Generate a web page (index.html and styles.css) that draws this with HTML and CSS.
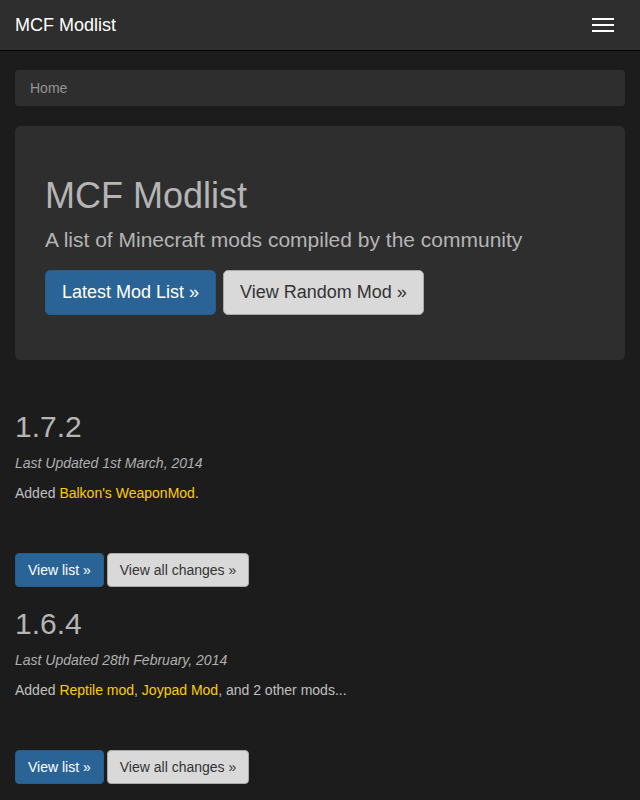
FILE: index.html
```html
<!DOCTYPE html>
<html lang="en">
<head>
<meta charset="utf-8">
<title>MCF Modlist</title>
<link rel="stylesheet" href="styles.css">
</head>
<body>
<nav class="navbar">
  <a class="brand" href="#">MCF Modlist</a>
  <button class="toggle" aria-label="Toggle navigation">
    <span class="bar"></span><span class="bar"></span><span class="bar"></span>
  </button>
</nav>
<div class="container">
  <ol class="breadcrumb"><li>Home</li></ol>
  <div class="jumbotron">
    <h1>MCF Modlist</h1>
    <p class="lead">A list of Minecraft mods compiled by the community</p>
    <p class="actions">
      <a class="btn btn-lg btn-primary" href="#">Latest Mod List »</a>
      <a class="btn btn-lg btn-default" href="#">View Random Mod »</a>
    </p>
  </div>
  <section class="version">
    <h2>1.7.2</h2>
    <p class="updated">Last Updated 1st March, 2014</p>
    <p class="changes">Added <a href="#">Balkon's WeaponMod</a>.</p>
    <div class="actions-sm">
      <a class="btn btn-primary" href="#">View list »</a>
      <a class="btn btn-default" href="#">View all changes »</a>
    </div>
  </section>
  <section class="version">
    <h2>1.6.4</h2>
    <p class="updated">Last Updated 28th February, 2014</p>
    <p class="changes">Added <a href="#">Reptile mod</a>, <a href="#">Joypad Mod</a>, and 2 other mods...</p>
    <div class="actions-sm">
      <a class="btn btn-primary" href="#">View list »</a>
      <a class="btn btn-default" href="#">View all changes »</a>
    </div>
  </section>
</div>
</body>
</html>
```
FILE: styles.css
```css
* { box-sizing: border-box; }
html, body { margin: 0; padding: 0; }
body {
  background: #1c1c1c;
  color: #c8c8c8;
  font-family: "Liberation Sans", Arial, sans-serif;
  font-size: 14px;
  line-height: 20px;
}
a { text-decoration: none; }

.navbar {
  height: 51px;
  background: #2e2e2e;
  border-bottom: 1px solid #050505;
  display: flex;
  align-items: center;
  justify-content: space-between;
  padding: 0 15px;
}
.brand {
  color: #ffffff;
  font-size: 18px;
  line-height: 20px;
  margin-top: -1px;
}
.toggle {
  background: transparent;
  border: 0;
  padding: 0;
  margin-right: 11px;
  width: 22px;
  display: flex;
  flex-direction: column;
  gap: 4px;
  margin-top: -1px;
  cursor: pointer;
}
.bar {
  display: block;
  width: 22px;
  height: 2px;
  background: #ffffff;
}

.container { padding: 0 15px; }

.breadcrumb {
  list-style: none;
  margin: 19px 0 20px;
  padding: 8px 15px;
  background: #2e2e2e;
  border-radius: 4px;
  color: #949494;
  height: 36px;
}

.jumbotron {
  background: #2e2e2e;
  border-radius: 6px;
  padding: 30px 30px;
  margin-bottom: 50px;
}
.jumbotron h1 {
  margin: 20px 0 10px;
  font-size: 36px;
  line-height: 39px;
  font-weight: 400;
  color: #b5b5b5;
}
.lead {
  margin: 0 0 15px;
  font-size: 21px;
  line-height: 30px;
  color: #b5b5b5;
}
.actions {
  margin: 0 0 15px;
  display: flex;
  gap: 7px;
}

.btn {
  display: inline-block;
  border: 1px solid transparent;
  border-radius: 4px;
  padding: 6px 12px;
  font-size: 14px;
  line-height: 20px;
  height: 34px;
}
.btn-lg {
  padding: 10px 16px;
  font-size: 18px;
  line-height: 23px;
  height: 45px;
  border-radius: 5px;
}
.btn-primary {
  background: #2a6496;
  border-color: #275d8b;
  color: #ffffff;
}
.btn-default {
  background: #d9d9d9;
  border-color: #a8a8a8;
  color: #333333;
}

.version h2 {
  margin: 20px 0 10px;
  font-size: 30px;
  line-height: 33px;
  font-weight: 400;
  color: #b5b5b5;
}
.updated {
  margin: 0 0 10px;
  font-style: italic;
  color: #b0b0b0;
}
.changes {
  margin: 0 0 50px;
  color: #c0c0c0;
}
.changes a { color: #ffcc00; }
.actions-sm {
  display: flex;
  gap: 3px;
}
```
